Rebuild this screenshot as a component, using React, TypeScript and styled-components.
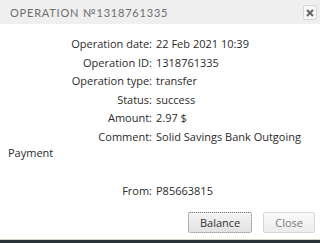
import React from 'react'
import styled, { createGlobalStyle } from 'styled-components'

const Global = createGlobalStyle`
  html, body { margin: 0; padding: 0; background: #fff; }
  body { width: 320px; height: 243px; overflow: hidden; }
`

const Dialog = styled.div`
  width: 320px;
  height: 243px;
  display: flex;
  flex-direction: column;
  font-family: 'Open Sans', 'Liberation Sans', sans-serif;
  color: #2b2b2b;
  background: #fff;
`

const Header = styled.div`
  height: 24px;
  flex-shrink: 0;
  display: flex;
  align-items: center;
  justify-content: space-between;
  padding: 0 3px 0 10px;
  background: #efefef;
`

const Title = styled.div`
  font-family: 'Lato', 'Liberation Sans', sans-serif;
  font-size: 11px;
  letter-spacing: 0.8px;
  color: #6e6e6e;
  text-transform: uppercase;
`

const CloseX = styled.button`
  width: 14px;
  height: 15px;
  padding: 0;
  margin-top: 1px;
  border: 1px solid #d6d6d6;
  border-radius: 2px;
  background: #f7f7f7;
  display: flex;
  align-items: center;
  justify-content: center;
`

const Body = styled.div`
  flex: 1;
  padding: 12px 8px 0 8px;
  font-size: 11px;
`

const Row = styled.div<{ $gap?: number; $tight?: boolean }>`
  line-height: 16px;
  margin-bottom: ${p => (p.$tight ? 0 : 2.6)}px;
  margin-top: ${p => p.$gap ?? 0}px;
  white-space: nowrap;
`

const Label = styled.span`
  display: inline-block;
  width: 144px;
  text-align: right;
  margin-right: 4px;
`

const Footer = styled.div`
  display: flex;
  justify-content: flex-end;
  gap: 11px;
  padding: 0 5px 6px 0;
`

const Button = styled.button<{ $focused?: boolean }>`
  height: 21px;
  padding: 0 11px;
  font-family: 'Open Sans', 'Liberation Sans', sans-serif;
  font-size: 11px;
  color: ${p => (p.$focused ? '#333' : '#7a7a7a')};
  background: ${p => (p.$focused ? 'linear-gradient(#f4f4f4, #e2e2e2)' : 'linear-gradient(#fafafa, #ececec)')};
  border: 1px ${p => (p.$focused ? 'dotted #777' : 'solid #d6d6d6')};
  border-radius: 2px;
`

const BottomBar = styled.div`
  height: 3px;
  flex-shrink: 0;
  background: #283338;
  border-top: 1px solid #d8d4c8;
`

const rows: [string, string][] = [
  ['Operation date:', '22 Feb 2021 10:39'],
  ['Operation ID:', '1318761335'],
  ['Operation type:', 'transfer'],
  ['Status:', 'success'],
  ['Amount:', '2.97 $'],
]

export default function App() {
  return (
    <>
      <Global />
      <Dialog>
        <Header>
          <Title>Operation №1318761335</Title>
          <CloseX>
            <svg width="8" height="8" viewBox="0 0 8 8">
              <path d="M1 1L7 7M7 1L1 7" stroke="#666" strokeWidth="2" />
            </svg>
          </CloseX>
        </Header>
        <Body>
          {rows.map(([l, v]) => (
            <Row key={l}>
              <Label>{l}</Label>
              {v}
            </Row>
          ))}
          <Row $tight>
            <Label>Comment:</Label>
            Solid Savings Bank Outgoing
          </Row>
          <Row>Payment</Row>
          <Row $gap={22}>
            <Label>From:</Label>
            P85663815
          </Row>
        </Body>
        <Footer>
          <Button $focused>Balance</Button>
          <Button>Close</Button>
        </Footer>
        <BottomBar />
      </Dialog>
    </>
  )
}
